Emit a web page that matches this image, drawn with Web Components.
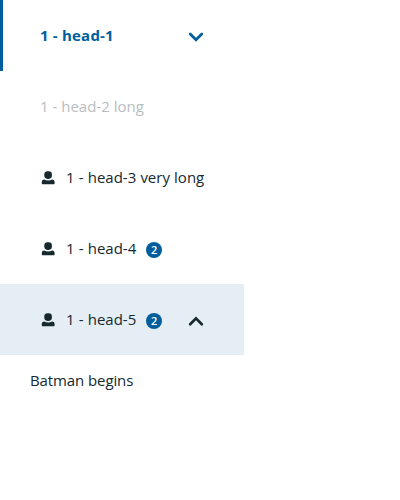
<!DOCTYPE html>
<html lang="en"><head><meta charset="utf-8"><title>Side tabs</title>
<style>body{margin:0;background:#fff;font-family:"Open Sans",sans-serif;font-size:15px;color:#15292f}</style></head>
<body><side-tabs></side-tabs>
<script>
class TabIcon extends HTMLElement{
 connectedCallback(){
  const name=this.getAttribute('name');
  const line='fill="none" stroke="currentColor" stroke-width="2.7" stroke-linecap="round"';
  const art={
   user:'<rect x="4.300" y="1.300" width="7.600" height="7.600" rx="3.300" fill="currentColor"/><path fill="currentColor" d="M4.300 9.600C5.400 10.200 6.800 10.500 8.200 10.500s2.800-.3 3.900-.9c1.600.1 2.500 1.100 2.500 2.700v.9c0 .6-.4 1-1 1H2.800c-.6 0-1-.4-1-1v-.9c0-1.600.9-2.600 2.500-2.700z"/>',
   down:`<path ${line} d="M2.200 5 8 10.800 13.800 5"/>`,
   up:`<path ${line} d="M2.200 11.200 8 5.400l5.800 5.800"/>`}[name];
  this.attachShadow({mode:'open'}).innerHTML=`<style>:host{display:block;width:16px;height:16px;flex:none}svg{display:block;width:16px;height:16px}</style><svg viewBox="0 0 16 16">${art}</svg>`;
 }
}
customElements.define('tab-icon',TabIcon);
class TabBadge extends HTMLElement{
 connectedCallback(){this.attachShadow({mode:'open'}).innerHTML=`<style>:host{display:block;box-sizing:border-box;width:16px;height:16px;border-radius:50%;background:#005e9d;color:#fff;font-size:11px;font-weight:600;line-height:16px;text-align:center;letter-spacing:0;word-spacing:0;margin:3px 0 0 10px}</style><slot></slot>`}
}
customElements.define('tab-badge',TabBadge);
class TabHead extends HTMLElement{
 connectedCallback(){this.attachShadow({mode:'open'}).innerHTML=`<style>
 :host{display:flex;align-items:center;box-sizing:border-box;height:71px;padding:0 40px 1px;line-height:20px;white-space:nowrap;word-spacing:.25px}
 :host([active]){border-left:3px solid #005e9d;padding-left:37px;color:#005e9d;font-weight:700;letter-spacing:.2px;word-spacing:0}
 :host([disabled]){color:#b8bebf;word-spacing:0}
 :host([open]){background:#e5edf5}
 ::slotted([slot=icon]){margin:1px 10px 0 0}
 ::slotted([slot=arrow]){margin:3px 0 0 auto}
 </style><slot name="icon"></slot><span><slot></slot></span><slot name="badge"></slot><slot name="arrow"></slot>`}
}
customElements.define('tab-head',TabHead);
class SideTabs extends HTMLElement{
 connectedCallback(){this.attachShadow({mode:'open'}).innerHTML=`<style>:host{display:block;width:244px}.panel{padding:14px 30px;line-height:22px;letter-spacing:-.1px}</style>
 <tab-head active>1 - head-1<tab-icon slot="arrow" name="down"></tab-icon></tab-head>
 <tab-head disabled>1 - head-2 long</tab-head>
 <tab-head><tab-icon slot="icon" name="user"></tab-icon>1 - head-3 very long</tab-head>
 <tab-head><tab-icon slot="icon" name="user"></tab-icon>1 - head-4<tab-badge slot="badge">2</tab-badge></tab-head>
 <tab-head open><tab-icon slot="icon" name="user"></tab-icon>1 - head-5<tab-badge slot="badge">2</tab-badge><tab-icon slot="arrow" name="up"></tab-icon></tab-head>
 <div class="panel">Batman begins</div>`}
}
customElements.define('side-tabs',SideTabs);
</script></body></html>
